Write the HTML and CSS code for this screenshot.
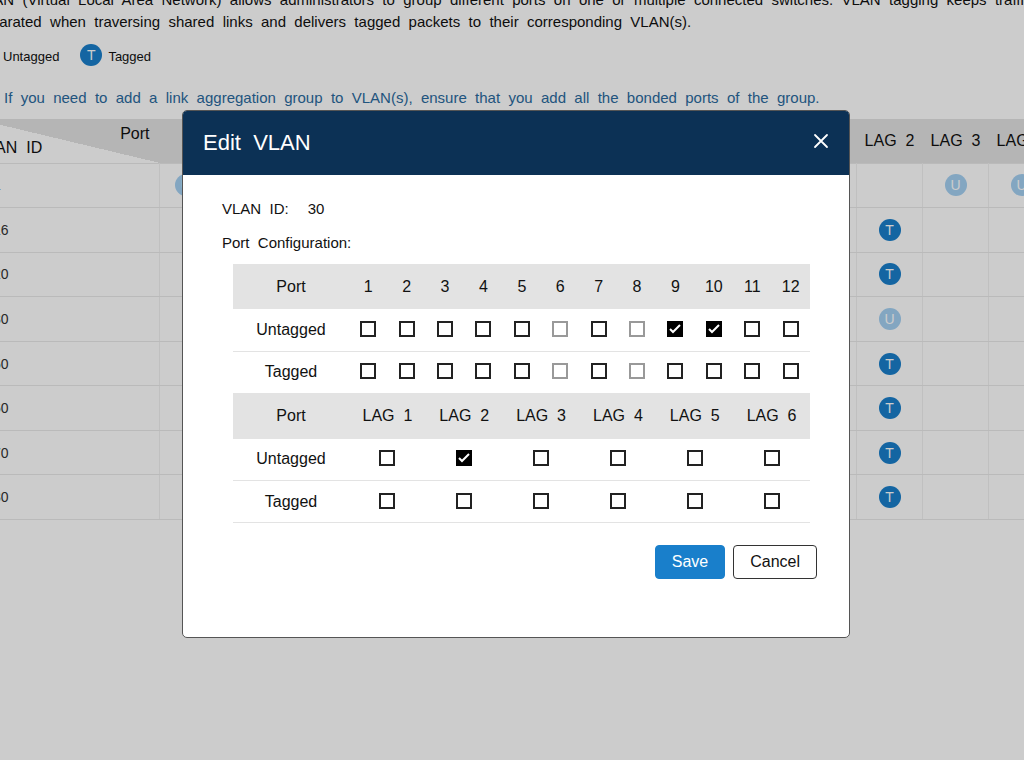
FILE: index.html
```
<!DOCTYPE html>
<html lang="en">
<head>
    <meta charset="UTF-8">
    <meta name="viewport" content="width=device-width, initial-scale=1.0">
    <title>VLAN</title>
    <link rel="stylesheet" href="styles.css">
</head>
<body>
    <main class="page">
        <p class="intro">VLAN&nbsp; (Virtual&nbsp; Local&nbsp; Area&nbsp; Network)&nbsp; allows&nbsp; administrators&nbsp; to&nbsp; group&nbsp; different&nbsp; ports&nbsp; on&nbsp; one&nbsp; or&nbsp; multiple&nbsp; connected&nbsp; switches.&nbsp; VLAN&nbsp; tagging&nbsp; keeps&nbsp; traffic<br>separated&nbsp; when&nbsp; traversing&nbsp; shared&nbsp; links&nbsp; and&nbsp; delivers&nbsp; tagged&nbsp; packets&nbsp; to&nbsp; their&nbsp; corresponding&nbsp; VLAN(s).</p>
        <div class="legend">
            <span class="legend-item"><span class="badge untagged">U</span>Untagged</span>
            <span class="legend-item"><span class="badge tagged">T</span>Tagged</span>
        </div>
        <p class="note">If&nbsp; you&nbsp; need&nbsp; to&nbsp; add&nbsp; a&nbsp; link&nbsp; aggregation&nbsp; group&nbsp; to&nbsp; VLAN(s),&nbsp; ensure&nbsp; that&nbsp; you&nbsp; add&nbsp; all&nbsp; the&nbsp; bonded&nbsp; ports&nbsp; of&nbsp; the&nbsp; group.</p>
        <table class="vlan-table">
            <thead>
                <tr id="vlanHead">
                    <th class="corner">
                        <span class="corner-port">Port</span>
                        <span class="corner-id">VLAN&nbsp; ID</span>
                    </th>
                </tr>
            </thead>
            <tbody id="vlanBody"></tbody>
        </table>
    </main>

    <div class="overlay">
        <div class="modal" role="dialog" aria-labelledby="modalTitle">
            <div class="modal-header">
                <h2 id="modalTitle">Edit&nbsp; VLAN</h2>
                <button type="button" class="close" aria-label="Close">
                    <svg width="16" height="16" viewBox="0 0 16 16" fill="none" stroke="#fff" stroke-width="1.8" stroke-linecap="round">
                        <path d="M2 2L14 14M14 2L2 14"/>
                    </svg>
                </button>
            </div>
            <form class="modal-body">
                <div class="field"><span>VLAN&nbsp; ID:</span><span>30</span></div>
                <div class="field">Port&nbsp; Configuration:</div>
                <div class="config">
                    <table class="config-table" id="portTable"></table>
                    <table class="config-table" id="lagTable"></table>
                </div>
                <div class="actions">
                    <button type="button" class="btn primary">Save</button>
                    <button type="button" class="btn">Cancel</button>
                </div>
            </form>
        </div>
    </div>

    <script>
        const ports = ['1', '2', '3', '4', '5', '6', '7', '8', '9', '10', '11', '12'];
        const lags = ['1', '2', '3', '4', '5', '6'].map(n => 'LAG\u00a0 ' + n);

        // column index -> U or T, ports first and then the LAGs
        const vlans = [
            { id: 1, members: { 0: 'U', 14: 'U', 15: 'U', 16: 'U', 17: 'U' } },
            { id: 16, members: { 13: 'T' } },
            { id: 20, members: { 13: 'T' } },
            { id: 30, members: { 8: 'U', 9: 'U', 13: 'U' } },
            { id: 50, members: { 13: 'T' } },
            { id: 60, members: { 13: 'T' } },
            { id: 70, members: { 13: 'T' } },
            { id: 80, members: { 13: 'T' } }
        ];

        const columns = ports.concat(lags);
        const head = document.getElementById('vlanHead');
        columns.forEach((name, i) => {
            const th = document.createElement('th');
            th.textContent = name;
            if (i >= ports.length) th.className = 'lag-col';
            head.appendChild(th);
        });

        const body = document.getElementById('vlanBody');
        vlans.forEach(vlan => {
            const row = body.insertRow();
            row.insertCell().textContent = vlan.id;
            columns.forEach((name, i) => {
                const cell = row.insertCell();
                const mode = vlan.members[i];
                if (mode) {
                    cell.innerHTML = `<span class="badge ${mode === 'T' ? 'tagged' : 'untagged'}">${mode}</span>`;
                }
            });
        });

        function fillConfig(tableId, names, checked, disabled) {
            const table = document.getElementById(tableId);
            const box = (mode, name, i) => {
                const on = mode === 'Untagged' && checked.includes(i) ? ' checked' : '';
                const off = disabled.includes(i) ? ' disabled' : '';
                return `<td><input type="checkbox" aria-label="${mode} ${name}"${on}${off}></td>`;
            };
            const line = mode => `<tr><th scope="row">${mode}</th>${names.map((n, i) => box(mode, n, i)).join('')}</tr>`;
            table.innerHTML =
                `<thead><tr><th>Port</th>${names.map(n => `<th>${n}</th>`).join('')}</tr></thead>` +
                `<tbody>${line('Untagged')}${line('Tagged')}</tbody>`;
        }

        fillConfig('portTable', ports, [8, 9], [5, 7]);
        fillConfig('lagTable', lags, [1], []);
    </script>
</body>
</html>
```
FILE: styles.css
```
* {
    box-sizing: border-box;
}
body {
    margin: 0;
    font-family: Arial, "Liberation Sans", sans-serif;
    font-size: 15px;
    color: #111;
    background-color: #fff;
    overflow: hidden;
}
p, h2 {
    margin: 0;
    font-weight: normal;
}
th {
    font-weight: normal;
}
.page {
    margin: -11px -163px 0 -25px;
}
.intro {
    line-height: 22px;
    white-space: nowrap;
}
.legend {
    display: flex;
    gap: 21px;
    margin-top: 11px;
    font-size: 13px;
}
.legend-item {
    display: flex;
    align-items: flex-end;
    gap: 6px;
    line-height: 18px;
}
.badge {
    display: inline-flex;
    align-items: center;
    justify-content: center;
    width: 22px;
    height: 22px;
    border-radius: 50%;
    color: #fff;
    font-size: 14px;
    vertical-align: middle;
}
.tagged {
    background-color: #197fcb;
}
.untagged {
    background-color: #a4d0f2;
}
.note {
    margin-top: 21px;
    padding-left: 29px;
    line-height: 22px;
    color: #2a6a9e;
}
.vlan-table {
    width: 100%;
    height: 401px;
    margin-top: 10px;
    table-layout: fixed;
    border-collapse: collapse;
    text-align: center;
    font-size: 16px;
}
.vlan-table th {
    height: 44px;
    padding: 0;
    background-color: #e3e3e3;
}
.vlan-table td {
    padding: 0;
    border: 1px solid #eee;
    border-color: #e9e9e9 #f0f0f0;
}
.vlan-table td:first-child {
    padding-left: 17px;
    text-align: left;
    font-size: 14px;
    color: #333;
}
.vlan-table .lag-col {
    width: 66px;
}
.vlan-table .corner {
    width: 184px;
    background-image: linear-gradient(to bottom left, #e3e3e3 50%, #fff 50%);
}
.corner-port, .corner-id {
    display: block;
    line-height: 14px;
}
.corner-port {
    padding-right: 10px;
    text-align: right;
}
.corner-id {
    text-align: left;
}
.overlay {
    position: fixed;
    inset: 0;
    padding: 110px 174px 0 182px;
    background-color: rgba(0, 0, 0, 0.2);
}
.modal {
    border: 1px solid #555;
    border-radius: 5px;
    background-color: #fff;
    overflow: hidden;
}
.modal-header {
    display: flex;
    align-items: center;
    justify-content: space-between;
    height: 64px;
    padding: 0 20px;
    background-color: #0c3155;
    color: #fff;
}
.modal-header h2 {
    font-size: 22px;
}
.close {
    display: flex;
    padding: 0 0 4px;
    border: none;
    background: none;
    cursor: pointer;
}
.modal-body {
    padding: 17px 32px 58px 39px;
}
.field {
    display: flex;
    gap: 19px;
    line-height: 34px;
}
.config {
    padding: 4px 7px 0 11px;
}
.config-table {
    width: 100%;
    table-layout: fixed;
    border-collapse: collapse;
    text-align: center;
    font-size: 16px;
}
.config-table th, .config-table td {
    height: 42px;
    padding: 0;
}
.config-table td {
    padding-bottom: 2px;
}
.config-table thead th {
    height: 45px;
    background-color: #e3e3e3;
}
.config-table th:first-child {
    width: 116px;
}
.config-table tbody tr {
    border-bottom: 1px solid #e3e3e3;
}
input[type="checkbox"] {
    display: block;
    appearance: none;
    width: 16px;
    height: 16px;
    margin: 0 auto;
    border: 2px solid #222;
    background-color: #fff;
}
input[type="checkbox"]:disabled {
    border-color: #999;
}
input[type="checkbox"]:checked {
    border-color: #000;
    background: #000 url("data:image/svg+xml,%3Csvg xmlns='http://www.w3.org/2000/svg' viewBox='0 0 12 12' fill='none' stroke='white' stroke-width='2'%3E%3Cpath d='M1 6L4 9L11 2'/%3E%3C/svg%3E") center / 12px no-repeat;
}
.actions {
    display: flex;
    justify-content: flex-end;
    gap: 8px;
    margin-top: 22px;
}
.btn {
    height: 34px;
    padding: 0 16px;
    border: 1px solid #333;
    border-radius: 4px;
    background-color: #fff;
    color: #111;
    font-family: inherit;
    font-size: 16px;
    cursor: pointer;
}
.btn.primary {
    border-color: #197fcb;
    background-color: #197fcb;
    color: #fff;
}
```
